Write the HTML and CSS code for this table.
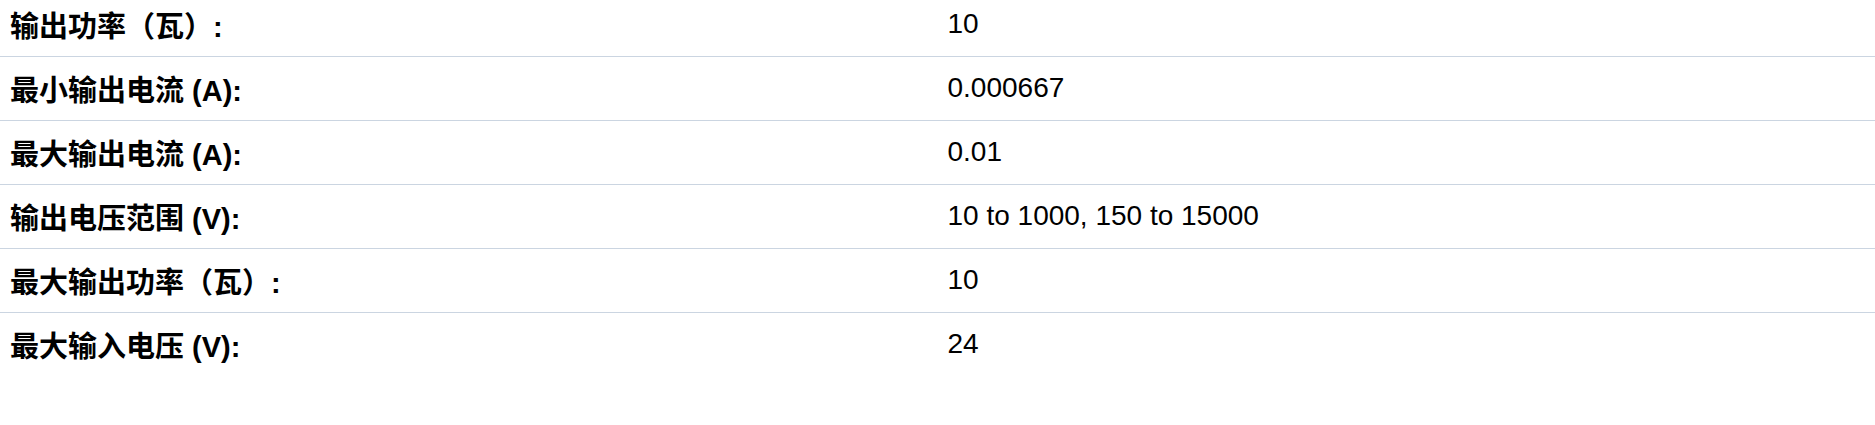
FILE: index.html
```html
<!DOCTYPE html>
<html lang="zh-CN">
<head>
<meta charset="utf-8">
<title>规格</title>
<link rel="stylesheet" href="styles.css">
</head>
<body>
<table class="spec-table">
  <tbody>
    <tr><th>输出功率（瓦）:</th><td>10</td></tr>
    <tr><th>最小输出电流 (A):</th><td>0.000667</td></tr>
    <tr><th>最大输出电流 (A):</th><td>0.01</td></tr>
    <tr><th>输出电压范围 (V):</th><td>10 to 1000, 150 to 15000</td></tr>
    <tr><th>最大输出功率（瓦）:</th><td>10</td></tr>
    <tr><th>最大输入电压 (V):</th><td>24</td></tr>
  </tbody>
</table>
</body>
</html>
```
FILE: styles.css
```css
html, body {
  margin: 0;
  padding: 0;
  background: #ffffff;
}
body {
  font-family: "Liberation Sans", Arial, "Noto Sans CJK SC", sans-serif;
  color: #000000;
}
.spec-table {
  width: 100%;
  border-collapse: collapse;
  table-layout: fixed;
  margin-top: -8px;
  font-size: 28px;
}
.spec-table tr {
  height: 64px;
  border-bottom: 1px solid #cbd5e1;
}
.spec-table tr:last-child {
  border-bottom: none;
}
.spec-table th,
.spec-table td {
  padding: 0 10px;
  text-align: left;
  vertical-align: middle;
  width: 50%;
}
.spec-table th {
  font-weight: 700;
  font-size: 29px;
}
.spec-table td {
  font-weight: 400;
}
```
